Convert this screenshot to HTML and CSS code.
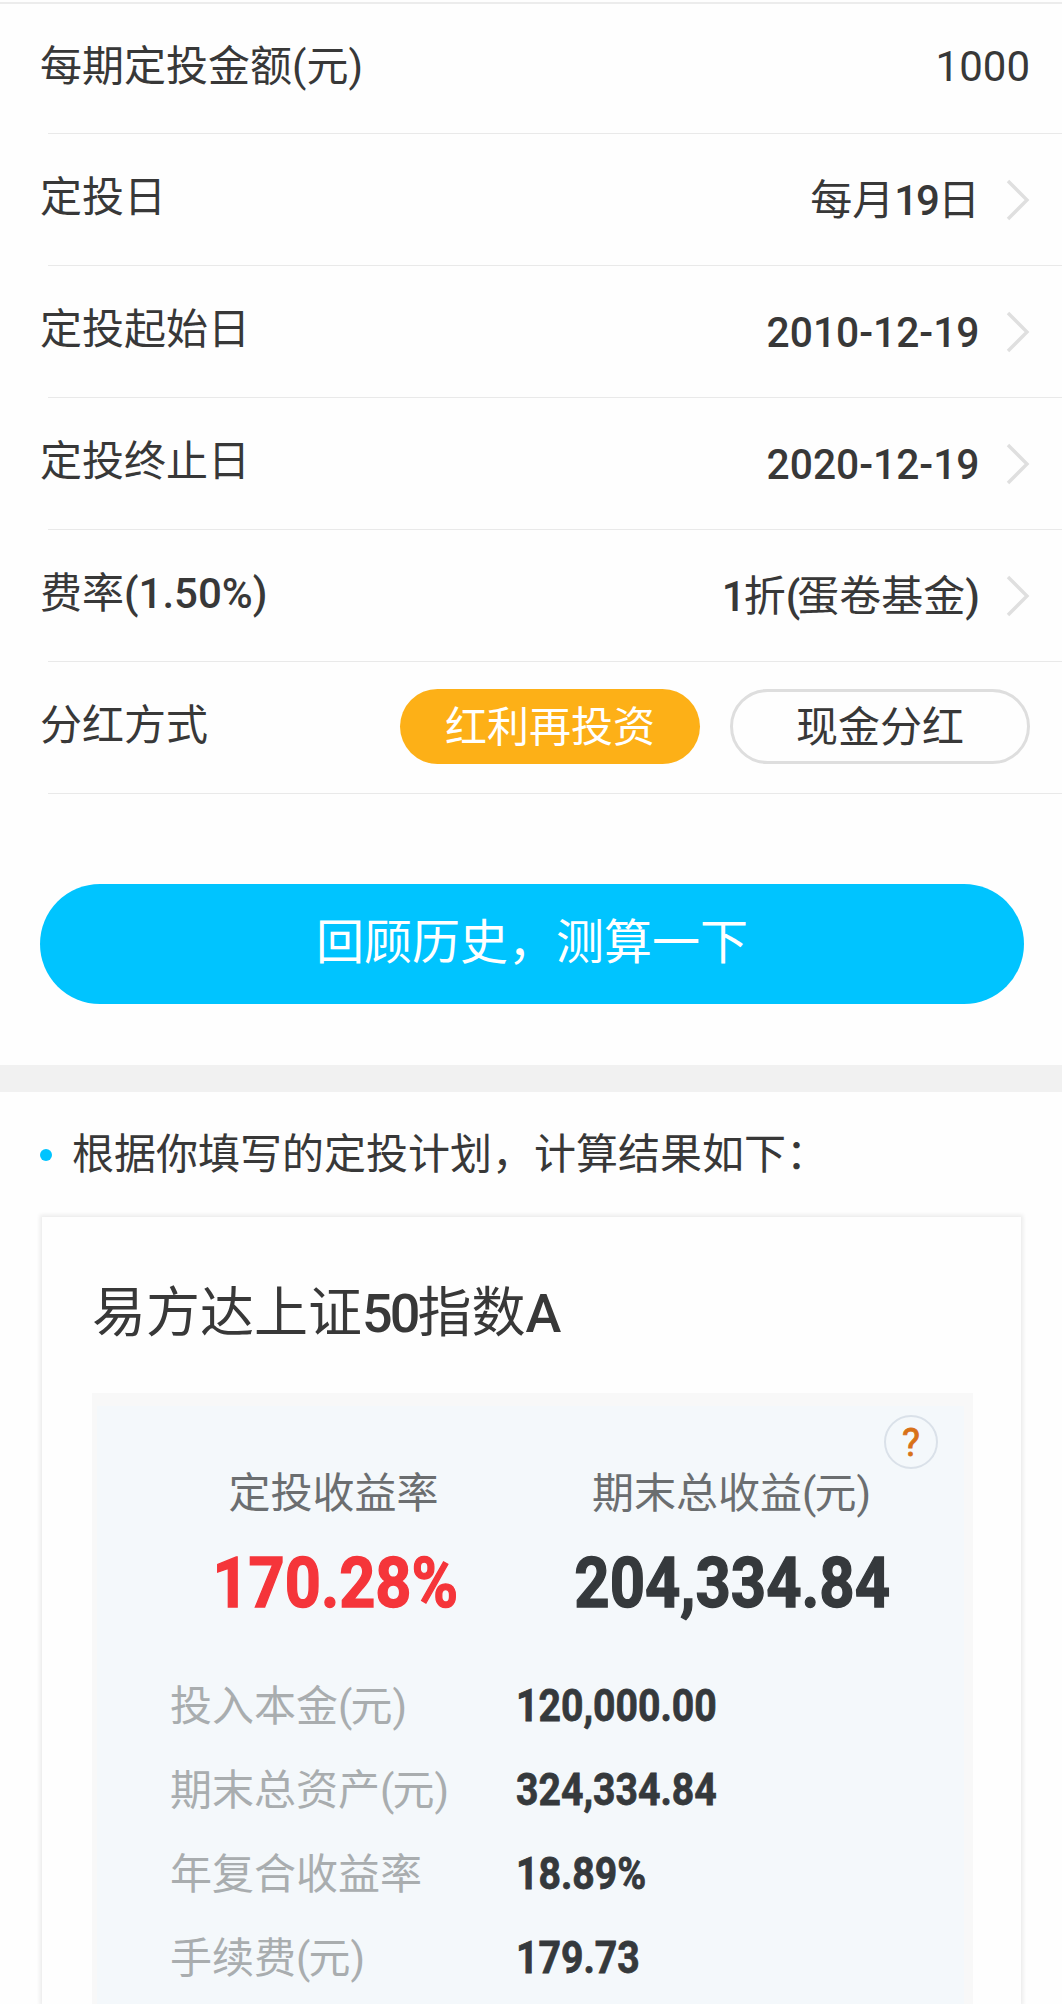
FILE: index.html
```html
<!DOCTYPE html>
<html lang="zh-CN">
<head>
    <meta charset="UTF-8">
    <meta name="viewport" content="width=device-width, initial-scale=1.0">
    <link rel="stylesheet" href="styles.css">
    <title>定投计算器</title>
</head>
<body>
    <div class="form">
        <div class="row first">
            <div class="label">每期定投金额(元)</div>
            <div class="amount">1000</div>
        </div>
        <div class="line"></div>
        <div class="row">
            <div class="label">定投日</div>
            <div class="value">每月<span class="num day">19</span>日</div>
            <svg class="arrow" viewBox="0 0 24 42"><path d="M2 2 L21 21 L2 40"/></svg>
        </div>
        <div class="line"></div>
        <div class="row">
            <div class="label">定投起始日</div>
            <div class="value num date">2010-12-19</div>
            <svg class="arrow" viewBox="0 0 24 42"><path d="M2 2 L21 21 L2 40"/></svg>
        </div>
        <div class="line"></div>
        <div class="row">
            <div class="label">定投终止日</div>
            <div class="value num date">2020-12-19</div>
            <svg class="arrow" viewBox="0 0 24 42"><path d="M2 2 L21 21 L2 40"/></svg>
        </div>
        <div class="line"></div>
        <div class="row">
            <div class="label">费率<span class="num">(1.50%)</span></div>
            <div class="value"><span class="num tight">1</span>折<span class="num tight">(</span>蛋卷基金<span class="num tight">)</span></div>
            <svg class="arrow" viewBox="0 0 24 42"><path d="M2 2 L21 21 L2 40"/></svg>
        </div>
        <div class="line"></div>
        <div class="row">
            <div class="label">分红方式</div>
            <div class="options">
                <div class="option active">红利再投资</div>
                <div class="option">现金分红</div>
            </div>
        </div>
        <div class="line"></div>
        <div class="submit">回顾历史，测算一下</div>
    </div>

    <div class="result">
        <div class="tip"><span class="dot"></span>根据你填写的定投计划，计算结果如下：</div>
        <div class="card">
            <div class="fund-name">易方达上证<span class="num">50</span>指数<span class="num">A</span></div>
            <div class="panel">
                <div class="help">?</div>
                <div class="summary">
                    <div class="summary-item rate">
                        <div class="summary-label">定投收益率</div>
                        <div class="summary-value red">170.28%</div>
                    </div>
                    <div class="summary-item total">
                        <div class="summary-label">期末总收益<span class="paren">(</span>元<span class="paren">)</span></div>
                        <div class="summary-value">204,334.84</div>
                    </div>
                </div>
                <div class="detail">
                    <div class="detail-label">投入本金<span class="paren">(</span>元<span class="paren">)</span></div>
                    <div class="detail-value">120,000.00</div>
                    <div class="detail-label">期末总资产<span class="paren">(</span>元<span class="paren">)</span></div>
                    <div class="detail-value">324,334.84</div>
                    <div class="detail-label">年复合收益率</div>
                    <div class="detail-value">18.89%</div>
                    <div class="detail-label">手续费<span class="paren">(</span>元<span class="paren">)</span></div>
                    <div class="detail-value">179.73</div>
                </div>
            </div>
        </div>
    </div>
</body>
</html>
```
FILE: styles.css
```css
* {
    box-sizing: border-box;
}

body {
    margin: 0;
    font-family: Roboto, "Noto Sans CJK SC", sans-serif;
    font-size: 42px;
    line-height: 60px;
    color: #383838;
    background-color: #fefefe;
    white-space: nowrap;
}

/* 表单 */
.form {
    height: 1065px;
    padding-top: 2px;
}

.row {
    display: flex;
    align-items: center;
    height: 131px;
    padding: 0 32px 0 40px;
}

.row.first {
    padding-bottom: 3px;
    border-top: 2px solid #ececec;
}

.line {
    height: 1px;
    margin-left: 48px;
    background-color: #e9e9e9;
}

.label {
    flex: 1;
    padding-bottom: 3px;
}

.first .label {
    padding-bottom: 0;
}

.num {
    font-weight: 500;
}

.value {
    padding-top: 2px;
}

.day {
    letter-spacing: -2px;
}

.date {
    transform: scaleX(0.97);
    transform-origin: right;
}

.tight {
    letter-spacing: -3px;
}

.value .tight:last-child {
    letter-spacing: 0;
}

.value .tight:first-child {
    letter-spacing: -2px;
}

.arrow {
    width: 24px;
    height: 42px;
    margin-left: 26px;
    fill: none;
    stroke: #dfdfdf;
    stroke-width: 3.4;
}

.options {
    display: flex;
    gap: 30px;
    padding-bottom: 2px;
}

.option {
    width: 300px;
    height: 75px;
    line-height: 72px;
    border: 3px solid #dedede;
    border-radius: 38px;
    text-align: center;
}

.option.active {
    border: none;
    line-height: 78px;
    color: #fff;
    background-color: #fdb017;
}

.submit {
    margin: 90px 38px 0 40px;
    height: 120px;
    line-height: 117px;
    border-radius: 60px;
    font-size: 48px;
    text-align: center;
    color: #fff;
    background-color: #00c4ff;
}

/* 计算结果 */
.result {
    height: 939px;
    border-top: 27px solid #f1f1f1;
    padding: 33px 38px 0 40px;
    overflow: hidden;
}

.tip {
    display: flex;
    align-items: center;
}

.dot {
    width: 12px;
    height: 12px;
    margin-right: 20px;
    border-radius: 50%;
    background-color: #00c4ff;
}

.card {
    margin: 32px 3px 0 2px;
    height: 787px;
    padding: 67px 48px 0 50px;
    box-shadow: 0 0 4px 2px #ebebeb;
    background-color: #fefefe;
}

.fund-name {
    font-size: 54px;
    line-height: 60px;
}

.fund-name .num {
    letter-spacing: -3px;
}

.panel {
    position: relative;
    margin-top: 49px;
    height: 611px;
    border: solid #f8f8f8;
    border-width: 13px 9px 0 5px;
    background-color: #f4f8fb;
}

.help {
    position: absolute;
    top: 9px;
    right: 26px;
    width: 54px;
    height: 54px;
    line-height: 52px;
    border: 2.5px solid #dae1e9;
    border-radius: 50%;
    font-size: 38px;
    text-align: center;
    color: #d87118;
    -webkit-text-stroke: 0.8px #d87118;
}

.summary {
    display: flex;
    padding-top: 58px;
}

.summary-item {
    display: flex;
    flex-direction: column;
    align-items: center;
}

.rate {
    width: 473px;
}

.total {
    width: 321px;
}

.summary-label {
    color: #6b6e70;
}

.paren {
    letter-spacing: -2px;
}

.summary-value {
    margin-top: 18px;
    padding-left: 4px;
    font-size: 70px;
    line-height: 82px;
    font-weight: bold;
    color: #35393c;
    transform: scaleX(0.88);
    -webkit-text-stroke: 1.4px;
}

.summary-value.red {
    color: #f5353a;
    transform: scaleX(0.9);
}

.detail {
    display: grid;
    grid-template-columns: 346px 1fr;
    grid-auto-rows: 84px;
    align-items: center;
    margin-top: 41px;
    padding-left: 73px;
}

.detail-label {
    color: #a9adaf;
}

.detail-value {
    padding-bottom: 2px;
    font-size: 45px;
    font-weight: bold;
    color: #35393c;
    transform: scaleX(0.87);
    transform-origin: left;
    -webkit-text-stroke: 0.8px;
}
```
